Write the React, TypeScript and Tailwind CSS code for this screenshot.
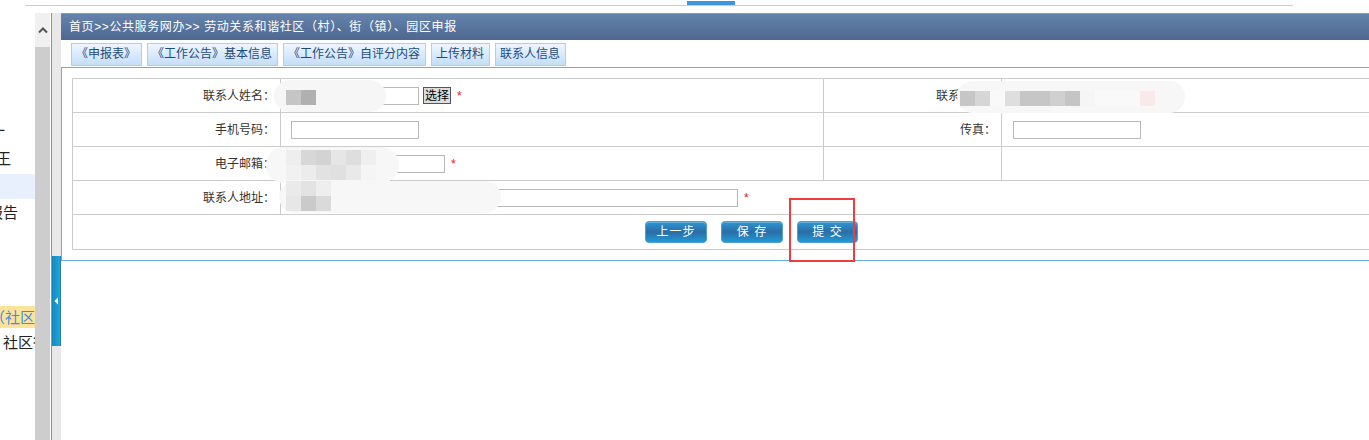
import React from "react"

const tabs = ["《申报表》", "《工作公告》基本信息", "《工作公告》自评分内容", "上传材料", "联系人信息"]

// redacted areas in the screenshot are blurred mosaics
function Mosaic({ rows }: { rows: string[][] }) {
  return (
    <div className="flex flex-col">
      {rows.map((r, i) => (
        <div key={i} className="flex">
          {r.map((c, j) => (
            <div key={j} className="w-[15px] h-[15px]" style={{ backgroundColor: c }} />
          ))}
        </div>
      ))}
    </div>
  )
}

function Star() {
  return <span className="text-[#ee1111] text-[12px] ml-[6px] leading-none">*</span>
}

function Input({ w }: { w: string }) {
  return <div className={`h-[18px] border border-[#b8b8b8] bg-white ${w}`} />
}

function Label({ text }: { text: string }) {
  return (
    <td className="border border-[#cccccc] h-[34px] text-right pr-[5px] text-[12px] text-[#333333] leading-none">
      {text}
    </td>
  )
}

function Btn({ text, w }: { text: string; w: string }) {
  return (
    <button
      className={`h-[22px] ${w} rounded-[4px] border border-[#4d9fd4] bg-gradient-to-b from-[#2a97d4] via-[#2c6da6] to-[#1b9ad6] text-white text-[12px] tracking-[1px] leading-none shadow-[inset_0_1px_0_rgba(255,255,255,0.25)]`}
    >
      {text}
    </button>
  )
}

export default function App() {
  return (
    <div className="relative w-[1369px] h-[440px] overflow-hidden bg-white font-['Liberation_Sans','Noto_Sans_CJK_SC',sans-serif]">
      {/* top strip */}
      <div className="h-[13px] relative">
        <div className="absolute left-[25px] top-[5px] w-[1268px] h-px bg-[#cccccc]" />
        <div className="absolute left-[687px] top-[1px] w-[48px] h-[4px] bg-[#3f95dc]" />
      </div>

      <div className="flex h-[427px]">
        {/* sidebar, scrolled horizontally */}
        <div className="w-[35px] overflow-hidden text-[15px] leading-none text-[#222222] whitespace-nowrap">
          <div className="h-[104px]" />
          <div className="h-[27px] flex items-center">
            <span className="ml-[-10px]">一</span>
          </div>
          <div className="h-[28px] flex items-center">
            <span className="ml-[-4px]">王</span>
          </div>
          <div className="h-[25px] mt-[2px] bg-[#e8f0fd]" />
          <div className="h-[26px] flex items-center">
            <span className="ml-[-12px]">报告</span>
          </div>
          <div className="h-[81px]" />
          <div className="h-[22px] flex items-center bg-[#fde39a] text-[#3d8fe0]">
            <span className="ml-[-10px]">（社区街</span>
          </div>
          <div className="h-[28px] flex items-center">
            <span className="ml-[3px]">社区征</span>
          </div>
        </div>

        {/* scrollbar */}
        <div className="w-[15px] flex flex-col">
          <div className="h-[34px] bg-[#f0f0f0] flex items-center justify-center">
            <svg width="10" height="8" viewBox="0 0 10 8">
              <path d="M1 6.5 L5 2.5 L9 6.5" fill="none" stroke="#555555" strokeWidth="2" />
            </svg>
          </div>
          <div className="flex-1 bg-[#cdcdcd]" />
        </div>
        <div className="w-px" />

        {/* splitter */}
        <div className="w-[10px] border-l border-[#4aa8d8] bg-[#e8e8e8] flex flex-col">
          <div className="h-[243px]" />
          <div className="h-[90px] w-[9px] bg-gradient-to-r from-[#1b86bd] to-[#15aadb] border-r border-[#2b7cae] flex items-center justify-center">
            <svg width="5" height="8" viewBox="0 0 5 8">
              <path d="M4 0.5 L0.5 4 L4 7.5 Z" fill="#ffffff" />
            </svg>
          </div>
        </div>

        {/* main */}
        <div className="flex-1 min-w-0">
          <div className="h-[27px] border-t border-[#8d98b2] bg-gradient-to-b from-[#6583ab] to-[#4e6890] flex items-center pl-[8px] text-white text-[12px] tracking-[0.6px] leading-none">
            首页&gt;&gt;公共服务网办&gt;&gt; 劳动关系和谐社区（村）、街（镇）、园区申报
          </div>

          <div className="h-[27px] flex items-start pt-[3px] pl-[10px] gap-[5px]">
            {tabs.map((t) => (
              <div
                key={t}
                className="h-[23px] pl-[4px] pr-[5px] border border-[#a9d3ea] bg-gradient-to-b from-[#eef6ff] to-[#c4def8] text-[#1f4b7c] text-[12px] leading-[21px] whitespace-nowrap"
              >
                {t}
              </div>
            ))}
          </div>

          <div className="w-[1400px] border-t border-l border-b border-[#63b1db] pt-[10px] pb-[10px] pl-[10px]">
            <table className="border-collapse w-[1359px] table-fixed">
              <colgroup>
                <col className="w-[208px]" />
                <col className="w-[543px]" />
                <col className="w-[178px]" />
                <col />
              </colgroup>
              <tbody>
                <tr>
                  <Label text="联系人姓名：" />
                  <td className="border border-[#cccccc]">
                    <div className="relative flex items-center pl-[10px]">
                      <Input w="w-[128px]" />
                      <button className="ml-[4px] h-[17px] px-[1px] border border-[#555555] bg-[#dddddd] text-[12px] leading-[14px] text-black">
                        选择
                      </button>
                      <Star />
                      <div className="absolute left-[-7px] top-[-7px] w-[112px] h-[32px] rounded-full bg-[#f6f6f6] pl-[12px] pt-[10px]">
                        <Mosaic rows={[["#c5c5c5", "#b0b0b0"]]} />
                      </div>
                    </div>
                  </td>
                  <Label text="联系电话：" />
                  <td className="border border-[#cccccc]">
                    <div className="relative h-[32px]">
                      <div className="absolute left-[-45px] top-[1px] w-[228px] h-[32px] rounded-full bg-[#f7f7f7] pl-[3px] pt-[10px]">
                        <Mosaic
                          rows={[
                            ["#c6c6c6", "#d6d6d6", "#f9f9f9", "#dedede", "#c6c6c6", "#c6c6c6", "#d0d0d0", "#c5c5c5", "#f5f5f5", "#f9f9f9", "#f9f9f9", "#f9f9f9", "#f9e9e9"],
                          ]}
                        />
                      </div>
                    </div>
                  </td>
                </tr>
                <tr>
                  <Label text="手机号码：" />
                  <td className="border border-[#cccccc]">
                    <div className="flex items-center pl-[10px]">
                      <Input w="w-[128px]" />
                    </div>
                  </td>
                  <Label text="传真：" />
                  <td className="border border-[#cccccc]">
                    <div className="flex items-center pl-[11px]">
                      <Input w="w-[128px]" />
                    </div>
                  </td>
                </tr>
                <tr>
                  <Label text="电子邮箱：" />
                  <td className="border border-[#cccccc]">
                    <div className="relative flex items-center pl-[10px]">
                      <Input w="w-[154px]" />
                      <Star />
                      <div className="absolute left-[-15px] top-[-8px] w-[133px] h-[36px] rounded-full bg-[#f7f7f7] pl-[20px] pt-[3px]">
                        <Mosaic
                          rows={[
                            ["#eeeeee", "#d7d7d7", "#d3d3d3", "#e6e6e6", "#dedede", "#efefef"],
                            ["#f1f1f1", "#ececec", "#e2e2e2", "#e0e0e0", "#e9e9e9", "#f5f5f5"],
                          ]}
                        />
                      </div>
                    </div>
                  </td>
                  <td className="border border-[#cccccc]" />
                  <td className="border border-[#cccccc]" />
                </tr>
                <tr>
                  <Label text="联系人地址：" />
                  <td className="border border-[#cccccc]" colSpan={3}>
                    <div className="relative flex items-center pl-[10px]">
                      <Input w="w-[447px]" />
                      <Star />
                      <div className="absolute left-[-2px] top-[-8px] w-[222px] h-[32px] rounded-full bg-[#f7f7f7] pl-[7px]">
                        <Mosaic
                          rows={[
                            ["#eaeaea", "#e3e3e3", "#eeeeee"],
                            ["#e7e7e7", "#cacaca", "#dadada"],
                          ]}
                        />
                      </div>
                    </div>
                  </td>
                </tr>
                <tr>
                  <td className="border border-[#cccccc] h-[35px]" colSpan={4}>
                    <div className="flex justify-center gap-[14px]">
                      <Btn text="上一步" w="w-[62px]" />
                      <Btn text="保 存" w="w-[62px]" />
                      <Btn text="提 交" w="w-[61px]" />
                    </div>
                  </td>
                </tr>
              </tbody>
            </table>
          </div>
        </div>
      </div>

      {/* red highlight box drawn on the screenshot */}
      <div className="absolute left-[789px] top-[198px] w-[66px] h-[64px] border-2 border-[#f03c3c]" />
    </div>
  )
}
